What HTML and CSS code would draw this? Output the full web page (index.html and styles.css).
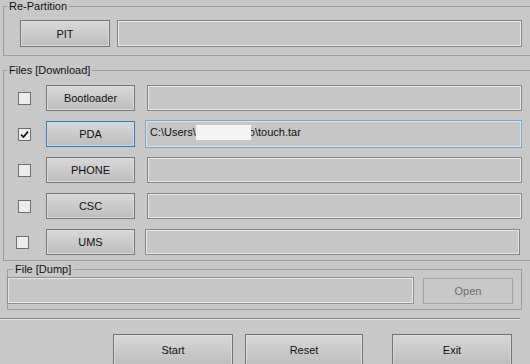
FILE: index.html
```html
<!DOCTYPE html>
<html lang="en">
<head>
<meta charset="UTF-8">
<title>Odin</title>
<link rel="stylesheet" href="styles.css">
</head>
<body>
<div class="window">
    <fieldset class="group repartition">
        <legend>Re-Partition</legend>
        <div class="group-body">
            <div class="row">
                <button class="btn btn-file">PIT</button>
                <div class="field field-pit"></div>
            </div>
        </div>
    </fieldset>

    <fieldset class="group files">
        <legend>Files [Download]</legend>
        <div class="group-body rows">
            <div class="row">
                <span class="check"></span>
                <button class="btn btn-file">Bootloader</button>
                <div class="field"></div>
            </div>
            <div class="row row-pda">
                <span class="check checked">
                    <svg width="9" height="9" viewBox="0 0 9 9"><path d="M1 4.6 L3.4 7 L8 1.6" fill="none" stroke="#111" stroke-width="1.7"/></svg>
                </span>
                <button class="btn btn-file active">PDA</button>
                <div class="field active">C:\Users\<span class="hidden-name"></span>o\touch.tar</div>
            </div>
            <div class="row">
                <span class="check"></span>
                <button class="btn btn-file">PHONE</button>
                <div class="field"></div>
            </div>
            <div class="row">
                <span class="check"></span>
                <button class="btn btn-file">CSC</button>
                <div class="field"></div>
            </div>
            <div class="row row-ums">
                <span class="check"></span>
                <button class="btn btn-file">UMS</button>
                <div class="field"></div>
            </div>
        </div>
    </fieldset>

    <fieldset class="group dump">
        <legend>File [Dump]</legend>
        <div class="group-body">
            <div class="row">
                <div class="field field-dump"></div>
                <button class="btn btn-open" disabled>Open</button>
            </div>
        </div>
    </fieldset>

    <div class="separator"></div>

    <div class="actions">
        <button class="btn btn-big">Start</button>
        <button class="btn btn-big btn-reset">Reset</button>
        <button class="btn btn-big btn-exit">Exit</button>
    </div>
</div>
</body>
</html>
```

FILE: styles.css
```css
html, body {
    margin: 0;
    width: 530px;
    height: 364px;
    overflow: hidden;
    background-color: #c8c8c8;
}
.window {
    font-family: "Liberation Sans", Arial, sans-serif;
    font-size: 11px;
    color: #111;
}

/* group boxes */
.group {
    border: 1px solid #9d9d9d;
    padding: 0;
    margin: 0;
    min-inline-size: 0;
}
.group legend {
    padding: 0 2px;
    margin-left: 3px;
    line-height: 12px;
    height: 12px;
}
.repartition {
    margin-left: 3px;
    margin-right: -20px;
}
.repartition .group-body {
    padding: 8px 0 8px 16px;
}
.files {
    margin: 8px -20px 0 3px;
}
.files .group-body {
    padding: 9px 0 5px 14px;
}
.rows {
    display: flex;
    flex-direction: column;
    gap: 10px;
}
.dump {
    box-sizing: border-box;
    width: 515px;
    margin: 2px 0 0 7px;
}
.dump legend {
    margin-left: 5px;
}
.dump .group-body {
    padding: 2px 0 5px 0;
}

.row {
    display: flex;
    align-items: center;
}

/* buttons */
.btn {
    font-family: "Liberation Sans", Arial, sans-serif;
    font-size: 11px;
    color: #111;
    border: 1px solid #737373;
    background: linear-gradient(#d8d8d8, #bdbdbd);
    box-shadow: inset 0 0 0 1px #dcdcdc;
    padding: 0;
    margin: 0;
}
.btn-file {
    width: 90px;
    height: 27px;
}
.files .btn-file {
    width: 89px;
    height: 26px;
}
.btn.active {
    border-color: #3d7bad;
    box-shadow: inset 0 0 0 1px #c9dbea;
}
.btn-open {
    width: 90px;
    height: 26px;
    margin-left: 9px;
    color: #6e6e6e;
    background: #c8c8c8;
    border-color: #a2a2a2;
    box-shadow: none;
}
.btn-big {
    width: 120px;
    height: 32px;
}

/* text boxes */
.field {
    box-sizing: border-box;
    height: 26px;
    border: 1px solid #838383;
    box-shadow: inset 0 0 0 1px #e9e9e9;
    background-color: #c6c6c6;
    margin-left: 12px;
    width: 375px;
}
.field-pit {
    height: 27px;
    margin-left: 7px;
    width: 405px;
}
.field.active {
    height: 28px;
    margin: -1px 0 -1px 10px;
    width: 377px;
    border-color: #7aa7cf;
    box-shadow: inset 0 0 0 1px #d6e3ee;
    padding: 4px 0 0 4px;
    line-height: 14px;
    white-space: nowrap;
}
.hidden-name {
    display: inline-block;
    vertical-align: top;
    width: 55px;
    height: 15px;
    margin-right: -2px;
    background-color: #f4f4f4;
    position: relative;
}
.row-ums .check {
    margin-left: -2px;
    margin-right: 17px;
}
.row-ums .field {
    margin-left: 10px;
}
.field-dump {
    margin-left: -1px;
    width: 407px;
    height: 27px;
    border-color: #8e8e8e;
}

/* checkboxes */
.check {
    box-sizing: border-box;
    width: 13px;
    height: 13px;
    border: 1px solid #6f6f6f;
    background-color: #ececec;
    margin-right: 15px;
    display: flex;
    align-items: center;
    justify-content: center;
}
.check svg {
    display: block;
}

/* bottom */
.separator {
    width: 520px;
    margin-top: 8px;
    border-top: 1px solid #858585;
    border-bottom: 1px solid #e2e2e2;
}
.actions {
    display: flex;
    padding-left: 113px;
    margin-top: 14px;
}
.btn-reset {
    width: 118px;
    margin-left: 12px;
}
.btn-exit {
    margin-left: 29px;
}
```
